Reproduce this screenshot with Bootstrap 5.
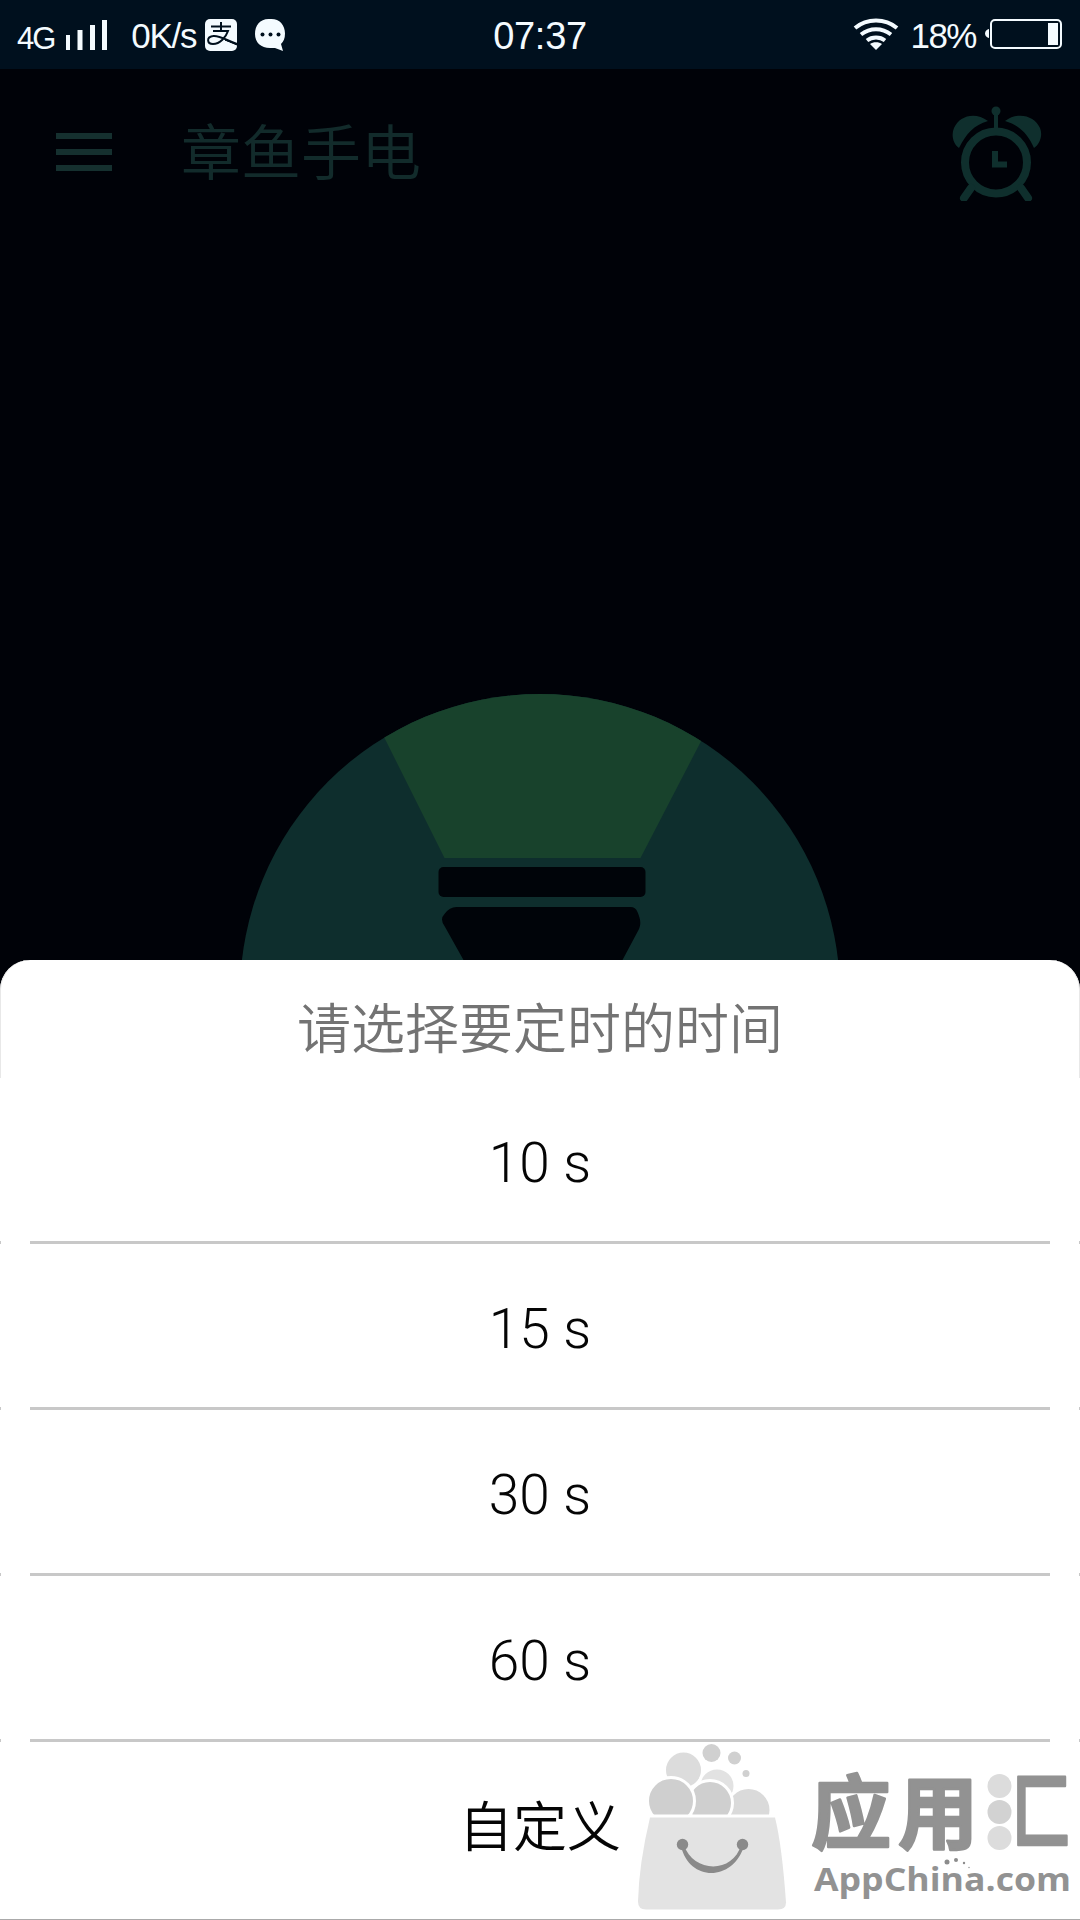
<!DOCTYPE html>
<html lang="zh-CN">
<head>
<meta charset="utf-8">
<meta name="viewport" content="width=device-width, initial-scale=1">
<title>章鱼手电</title>
<link href="https://cdn.jsdelivr.net/npm/bootstrap@5.3.0/dist/css/bootstrap.min.css" rel="stylesheet">
<style>
  body { background: #000208; font-family: "Liberation Sans", "Noto Sans CJK SC", sans-serif; }
  .phone { width: 1080px; height: 1920px; background: #000208; }
  .statusbar { height: 69px; background: #00101e; color: #f4fbff; padding: 0 17px 0 17px; }
  .st-text { font-size: 35px; line-height: 69px; white-space: nowrap; padding-top: 2px; }
  .st-net { font-size: 31px; letter-spacing: -2px; padding-top: 8px; line-height: 61px; }
  .st-speed { letter-spacing: -1.3px; margin-left: 19px; }
  .st-power { letter-spacing: -1.5px; margin: 0 8px 0 10px; }
  .st-clock { font-size: 38px; letter-spacing: -.3px; }
  .st-side { width: 440px; }
  .appbar { height: 168px; padding: 0 38px 0 56px; }
  .burger { width: 56px; height: 38px; margin-top: -3px; }
  .burger span { height: 6px; background: #15302f; }
  .app-title { font-family: "Noto Sans CJK SC", sans-serif; font-size: 60px; font-weight: 350; line-height: 60px; color: #122b2b; margin-left: 69px; margin-top: -9px; }
  .stage { height: 723px; }
  .sheet { height: 960px; border-radius: 30px 30px 0 0; border-bottom: 1px solid #aaa; }
  .sheet-title { height: 118px; font-family: "Noto Sans CJK SC", sans-serif; font-size: 54px; font-weight: 350; color: #737373; line-height: 118px; padding-top: 7px; box-shadow: inset 1px 0 #e8e8e8, inset -1px 0 #e8e8e8; border-radius: 30px 30px 0 0; }
  .choice { height: 166px; font-family: Roboto, "Noto Sans CJK SC", sans-serif; font-size: 55px; font-weight: 300; line-height: 163px; padding-top: 4px;
    background: linear-gradient(90deg, #c8c8c8 1px, #fff 1px 30px, #c8c8c8 30px 1050px, #fff 1050px 1079px, #c8c8c8 1079px) bottom / 100% 3px no-repeat #fff; color: #050505; }
  .choice-last { height: 176px; background: #fff; }
  .choice-last .choice-label { font-family: "Noto Sans CJK SC", sans-serif; font-size: 54px; font-weight: 350; line-height: 155px; }
  svg { display: block; flex: none; }
</style>
</head>
<body>
<main class="phone d-flex flex-column overflow-hidden mx-auto">
  <header class="statusbar d-flex justify-content-between flex-shrink-0">
    <div class="st-side d-flex align-items-center">
      <span class="st-text st-net">4G</span>
      <svg class="ms-2" width="50" height="69" viewBox="62 0 50 69" fill="#f4fbff"><path d="M66 35h4v15h-4zM77.500 30h5v20h-5zM90 25h5v25h-5zM102 20h5v30h-5z"/></svg>
      <span class="st-text st-speed">0K/s</span>
      <svg class="ms-2" width="84" height="69" viewBox="204 0 84 69">
        <rect x="205" y="19" width="32" height="32" rx="5" fill="#f4fbff"/>
        <g fill="none" stroke="#00101e" stroke-width="2"><path d="M211 26.500h20M221 22v9M213 31h15C226 37 220 44 213 44c-6 0-7-7 0-8 6-1 13 4 24 8"/></g>
        <path d="M237 44l-12-4 12 5z" stroke="#00101e" stroke-width="1"/>
        <path d="M268.500 19h3c8 0 13.500 6 13.500 14.500 0 5-1.500 8-4 10.500l2 7-8-3h-5c-9 0-15-5.500-15-14S260 19 268.500 19z" fill="#f4fbff"/>
        <g fill="#00101e"><circle cx="262.500" cy="34.500" r="2"/><circle cx="270.500" cy="34.500" r="2"/><circle cx="278.500" cy="34.500" r="2"/></g>
      </svg>
    </div>
    <div class="st-text st-clock">07:37</div>
    <div class="st-side d-flex align-items-center justify-content-end">
      <svg width="48" height="69" viewBox="853 0 48 69" fill="none" stroke="#f4fbff" stroke-width="4"><path d="M856 28c12-10 30-10 42 0M862 34.500c9-7 21-7 30 0M868 40.500c5-4 13-4 18 0"/><path d="M871 44c3-2.500 9-2.500 12 0l-6 6z" fill="#f4fbff" stroke="none"/></svg>
      <span class="st-text st-power">18%</span>
      <svg width="79" height="69" viewBox="984 0 79 69"><path d="M989 29v9c-2-.5-4-2-4-4.500s2-4 4-4.500z" fill="#f4fbff"/><rect x="991" y="20" width="70" height="28" rx="4" fill="none" stroke="#f4fbff" stroke-width="2"/><path d="M1048 23h10v22h-10z" fill="#f4fbff"/></svg>
    </div>
  </header>

  <nav class="appbar d-flex align-items-center flex-shrink-0">
    <div class="burger d-flex flex-column justify-content-between"><span></span><span></span><span></span></div>
    <div class="app-title">章鱼手电</div>
    <svg class="ms-auto" width="90" height="96" viewBox="952 105 90 96">
      <g fill="#0f2f2d"><path d="M959 148c-6-4-8-13-5-20 5-12 21-17 34-7-14 4-22 13-29 27zM1034 148c6-4 9-13 6-20-5-12-22-17-35-7 14 4 23 13 29 27z"/><circle cx="996" cy="111" r="4.500"/></g>
      <g fill="none" stroke="#0f2f2d"><circle cx="996" cy="162.500" r="31" stroke-width="8"/><path d="M996 112v18" stroke-width="4"/><path d="M971 188l-7 10M1021 188l7 10" stroke-width="8" stroke-linecap="round"/><path d="M995 151v13.500h12" stroke-width="6"/></g>
    </svg>
  </nav>

  <section class="stage flex-shrink-0 d-flex justify-content-center align-items-end overflow-hidden">
    <svg width="600" height="266" viewBox="240.500 694 600 266">
      <defs><clipPath id="disc"><circle cx="540.500" cy="994" r="300"/></clipPath></defs>
      <circle cx="540.500" cy="994" r="300" fill="#0e2e2d"/>
      <path d="M363 694h363l-85 164H445z" fill="#18422c" clip-path="url(#disc)"/>
      <rect x="439" y="867" width="207" height="30" rx="5" fill="#000409"/>
      <path d="M457 907H631q5 0 7 5c3 7 4 12 1 18l-16 30H464l-19-34q-5-7 0-12 5-7 12-7z" fill="#000409"/>
    </svg>
  </section>

  <section class="sheet bg-white flex-shrink-0 text-center">
    <div class="sheet-title">请选择要定时的时间</div>
    <div class="choice">10 s</div>
    <div class="choice">15 s</div>
    <div class="choice">30 s</div>
    <div class="choice">60 s</div>
    <div class="choice choice-last position-relative">
      <div class="choice-label">自定义</div>
      <svg class="position-absolute top-0 end-0" width="460" height="176" viewBox="620 1742 460 176">
        <g stroke="#fff" stroke-width="3">
          <circle cx="683.500" cy="1770" r="19" fill="#dcdcdc"/><circle cx="717" cy="1786" r="18" fill="#e2e2e2"/>
          <circle cx="748.500" cy="1810" r="22.500" fill="#dadada"/><circle cx="710" cy="1803" r="22.500" fill="#cfcfcf"/><circle cx="671" cy="1801" r="23.500" fill="#cfcfcf"/>
        </g>
        <g fill="#d0d0d0"><circle cx="711.500" cy="1753" r="9"/><circle cx="734.500" cy="1758" r="6.500"/><circle cx="746" cy="1773.500" r="3.500"/></g>
        <path d="M638 1814.500h148v26H638z" fill="#fff"/>
        <path d="M650 1817.500h125q7 28 11 85 0 7-8 7H646q-8 0-8-8 1-38 12-84z" fill="#e3e3e3"/>
        <g fill="#8a8a8a"><circle cx="682.500" cy="1844.500" r="5.700"/><circle cx="742.500" cy="1844.500" r="5.700"/><path d="M681 1846c8 36 52 36 63 0l-3-1c-8 29-48 28-57 0z"/></g>
        <g font-family="Noto Sans CJK SC, sans-serif" font-weight="700" font-size="80" fill="#929292" stroke="#929292" stroke-width="2.500" stroke-linejoin="round">
          <text x="811" y="1841.500">应</text><text x="898" y="1841.500">用</text>
          <text transform="translate(1012 1841.500) scale(.74 1.040)">匚</text>
        </g>
        <g fill="#dcdcdc"><circle cx="999.500" cy="1786" r="12"/><circle cx="999.500" cy="1812" r="12" fill="#d2d2d2"/><circle cx="999.500" cy="1838" r="12"/></g>
        <text x="814" y="1891" font-family="Open Sans, sans-serif" font-weight="700" font-size="33" textLength="257" lengthAdjust="spacingAndGlyphs" fill="#929292">AppChina.com</text>
        <g fill="#8c8c8c"><circle cx="947" cy="1862" r="2.500"/><circle cx="956" cy="1860" r="2"/><circle cx="964" cy="1863" r="1.200"/><circle cx="969" cy="1867.500" r=".7"/></g>
      </svg>
    </div>
  </section>
</main>
</body>
</html>
